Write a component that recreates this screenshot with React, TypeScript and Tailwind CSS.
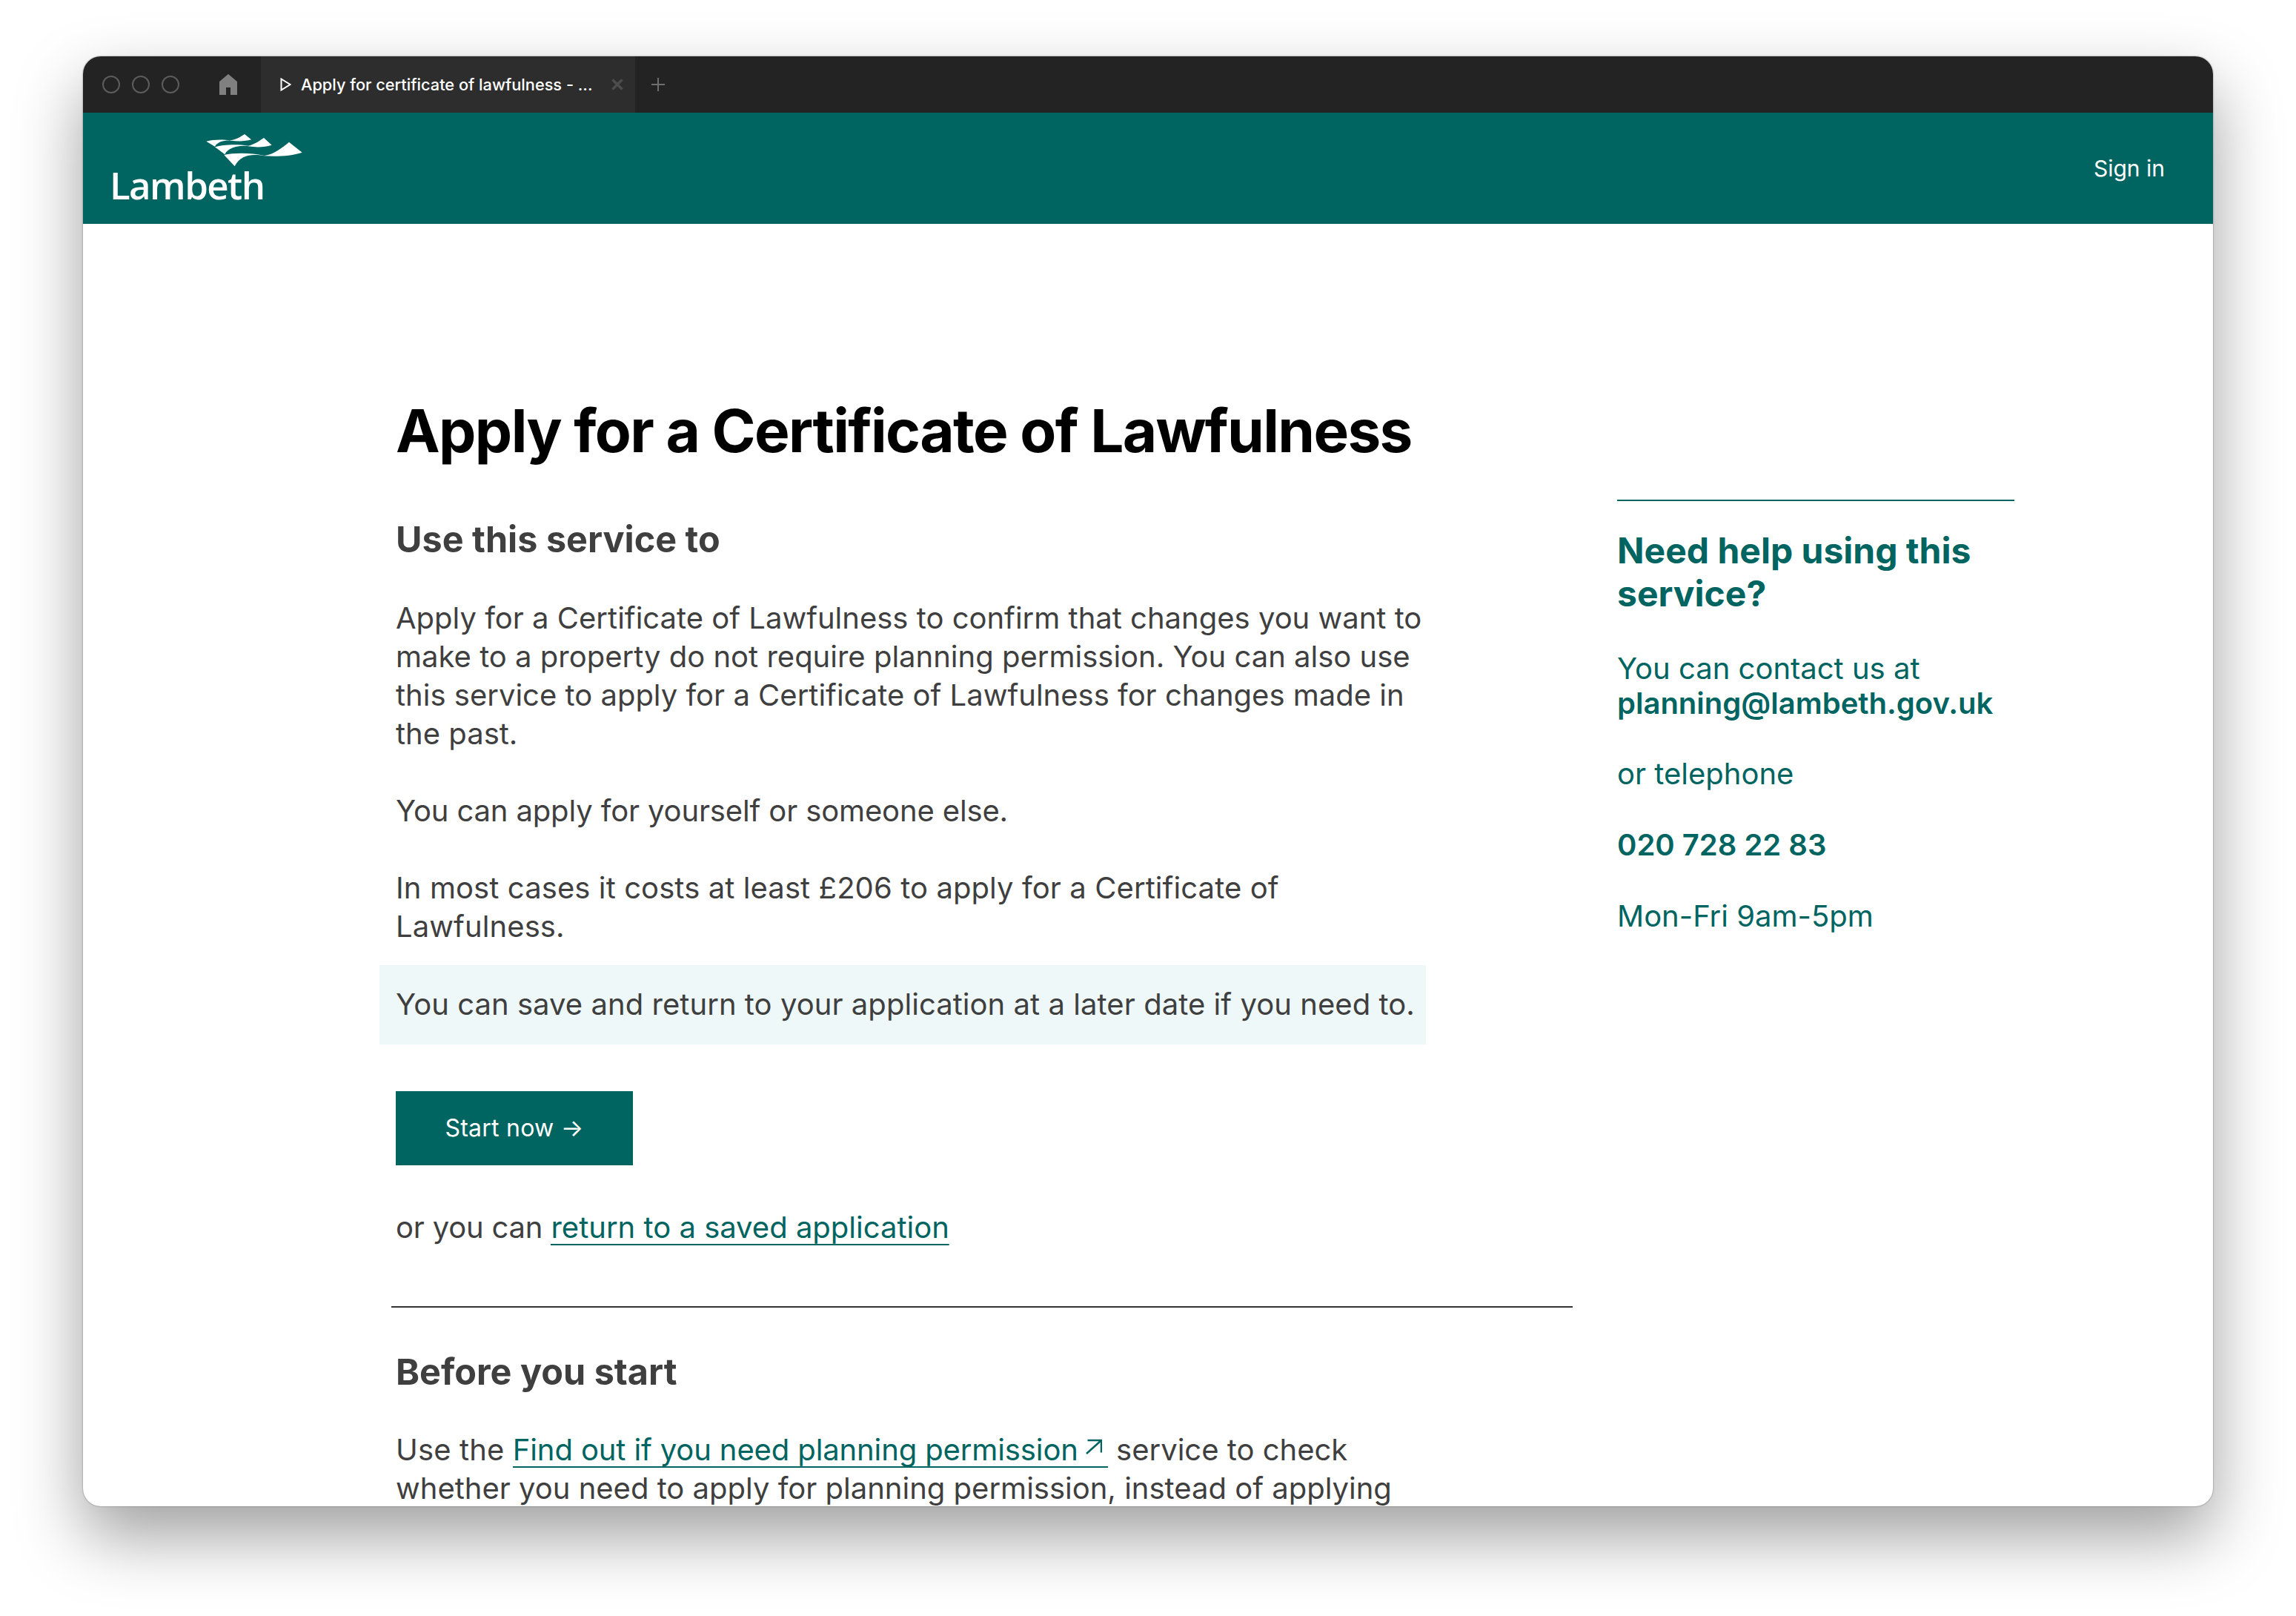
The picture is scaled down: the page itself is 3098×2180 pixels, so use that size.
function Logo() {
  return (
    <div className="flex flex-col items-start">
      <svg className="-mb-[8px] ml-[122px] block" width="150" height="60" viewBox="0 0 450 180" fill="#fff">
        <path d="M25 47C50 40 90 38 120 43C145 41 165 28 180 18L207 40C185 47 155 48 125 44C100 42 70 48 60 68Z" />
        <path d="M60 70C90 60 150 57 195 65C220 60 240 45 258 33L290 62C260 72 225 72 195 67C160 62 115 70 100 100Z" />
        <path d="M97 102C140 92 205 93 260 105C300 100 335 70 360 50L413 92C370 106 310 110 260 106C215 98 165 98 140 148Z" />
      </svg>
      <span className="font-['Open_Sans',sans-serif] text-[51px] leading-[44px] font-semibold tracking-[-1.6px] text-white">Lambeth</span>
    </div>
  );
}

function App() {
  return (
    <div className="h-[2180px] w-[3098px] overflow-hidden bg-white pt-[76px] pl-[112px] font-['Inter',sans-serif]">
      <div className="flex h-[1956px] w-[2874px] flex-col overflow-hidden rounded-[24px] bg-white shadow-[0_40px_90px_rgba(0,0,0,0.38),0_0_2px_rgba(0,0,0,0.5)]">
        <div className="flex h-[76px] shrink-0 items-center bg-[#232323]">
          <div className="flex w-[240px] items-center pl-[26px]">
            <span className="h-6 w-6 rounded-full border-2 border-[#5c5c5c]" />
            <span className="ml-4 h-6 w-6 rounded-full border-2 border-[#5c5c5c]" />
            <span className="ml-4 h-6 w-6 rounded-full border-2 border-[#5c5c5c]" />
            <svg className="ml-[54px]" width="24" height="28" viewBox="0 0 24 28" fill="#808080">
              <path d="M12 0L24 10V28H15V18H9V28H0V10Z" />
            </svg>
          </div>
          <div className="flex h-full w-[505px] items-center bg-[#2d2d2d] pl-[26px]">
            <svg width="15" height="18" viewBox="0 0 15 18" fill="none" stroke="#fff" strokeWidth="2">
              <path d="M1.500 1.500L13.500 9L1.500 16.500Z" />
            </svg>
            <span className="ml-[13px] text-[21.75px] font-medium whitespace-nowrap text-white">Apply for certificate of lawfulness - ...</span>
            <svg className="ml-[25px]" width="16" height="16" viewBox="0 0 16 16" stroke="#4d4d4d" strokeWidth="3.500">
              <path d="M1.500 1.500L14.500 14.500M14.500 1.500L1.500 14.500" />
            </svg>
          </div>
          <svg className="ml-[22px]" width="18" height="18" viewBox="0 0 18 18" stroke="#6e6e6e" strokeWidth="2">
            <path d="M9 0V18M0 9H18" />
          </svg>
        </div>
        <header className="flex h-[150px] shrink-0 items-start justify-between bg-[#006461] pt-[23px] pr-[65px] pl-[36px]">
          <Logo />
          <a className="mt-[30px] text-[30px] text-white">Sign in</a>
        </header>
        <main className="flex flex-1 pl-[422px]">
          <div className="w-[1610px] shrink-0 pt-[233px]">
            <h1 className="text-[80px] leading-[92px] font-bold tracking-[-1.65px] text-black">Apply for a Certificate of Lawfulness</h1>
            <h2 className="mt-[73px] text-[48.5px] leading-[56px] font-bold text-[#3f3f3f]">Use this service to</h2>
            <div className="w-[1420px] text-[40px] leading-[52px] text-[#3f3f3f]">
              <p className="mt-[52px]">Apply for a Certificate of Lawfulness to confirm that changes you want to make to a property do not require planning permission. You can also use this service to apply for a Certificate of Lawfulness for changes made in the past.</p>
              <p className="mt-[52px] tracking-[-0.14px]">You can apply for yourself or someone else.</p>
              <p className="mt-[52px] tracking-[0.09px]">In most cases it costs at least £206 to apply for a Certificate of Lawfulness.</p>
            </div>
            <p className="mt-[26px] -ml-[22px] flex h-[107px] w-[1412px] items-center bg-[#eef8f8] pb-[2px] pl-[22px] text-[40px] tracking-[0.05px] whitespace-nowrap text-[#3f3f3f]">You can save and return to your application at a later date if you need to.</p>
            <a className="mt-[63px] flex h-[100px] w-[320px] items-center justify-center bg-[#006461] text-[32px] tracking-[0.25px] text-white">Start now →</a>
            <p className="mt-[58px] text-[40px] leading-[52px] text-[#3f3f3f]"><span className="tracking-[-0.2px]">or you can</span> <a className="bg-[linear-gradient(#006461,#006461)] bg-[length:100%_2px] bg-bottom bg-no-repeat text-[#006461]">return to a saved application</a></p>
            <hr className="mt-[80px] -ml-[6px] w-[1594px] border-t-2 border-[#333333]" />
            <h2 className="mt-[59px] text-[48.5px] leading-[56px] font-bold text-[#3f3f3f]">Before you start</h2>
            <div className="mt-[51px] w-[1420px] text-[40px] leading-[52px] text-[#3f3f3f]">
              <span className="tracking-[0.15px]">Use the</span> <a className="bg-[linear-gradient(#006461,#006461)] bg-[length:100%_2px] bg-bottom bg-no-repeat tracking-[-0.12px] text-[#006461]">Find out if you need planning permission<svg className="mr-[8px] ml-[10px] inline-block align-[8px]" width="22" height="21" viewBox="0 0 22 21" fill="none" stroke="#006461" strokeWidth="2.500"><path d="M2.500 2H21V18.500M21 2L1 20" /></svg></a> service to check whether you need to apply for planning permission, instead of applying
            </div>
          </div>
          <aside className="ml-[38px] w-[536px] pt-[372px] text-[#006461]">
            <div className="border-t-2 border-[#006461] pt-[38px]">
              <h3 className="text-[48px] leading-[58px] font-bold">Need help using this service?</h3>
              <p className="mt-[48px] text-[40px] leading-[47px]">You can contact us at <span className="font-semibold">planning@lambeth.gov.uk</span></p>
              <p className="mt-[48px] text-[40px] leading-[47px]">or telephone</p>
              <p className="mt-[49px] text-[40px] leading-[47px] font-semibold">020 728 22 83</p>
              <p className="mt-[49px] text-[40px] leading-[47px]">Mon-Fri 9am-5pm</p>
            </div>
          </aside>
        </main>
      </div>
    </div>
  );
}

export default App;
